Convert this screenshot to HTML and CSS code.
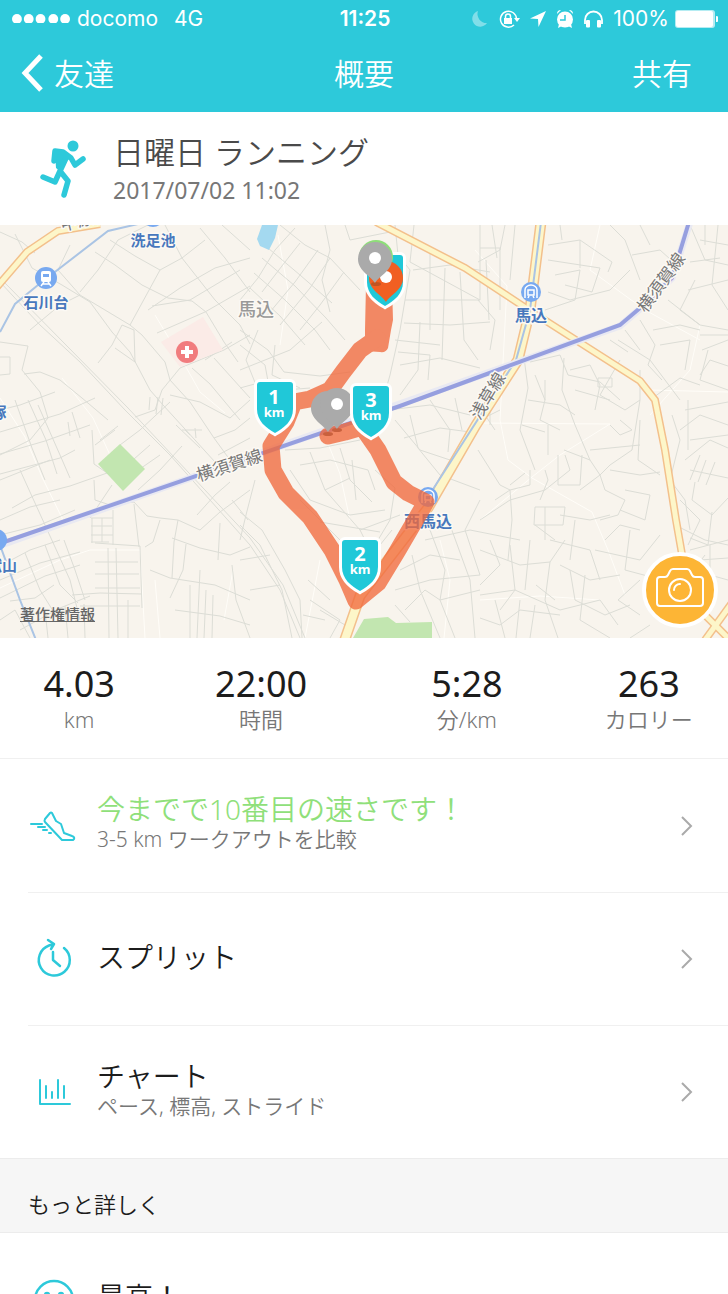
FILE: index.html
```html
<!DOCTYPE html>
<html lang="ja">
<head>
  <meta charset="UTF-8" />
  <meta name="viewport" content="width=device-width, initial-scale=1.0" />
  <title>概要</title>
  <link rel="stylesheet" href="styles.css">
</head>
<body>

  <header class="topbar">
    <div class="status">
      <div class="status-left">
        <svg class="signal" viewBox="0 0 60 10" aria-hidden="true">
          <circle cx="5" cy="5" r="5"/><circle cx="17" cy="5" r="5"/><circle cx="29" cy="5" r="5"/><circle cx="42" cy="5" r="5"/><circle cx="54" cy="5" r="5"/>
        </svg>
        <span>docomo</span>
        <span class="network">4G</span>
      </div>
      <span class="clock">11:25</span>
      <div class="status-right">
        <svg class="status-icons" viewBox="0 0 136 22" aria-hidden="true">
          <path opacity=".4" d="M7 3a8 8 0 1 0 9 12A9 9 0 0 1 7 3z"/>
          <g fill="none" stroke="#fff" stroke-width="1.5">
            <path d="M43 17a8 8 0 1 1 2.500-6"/>
            <path d="M34.500 11V8.500a2.500 2.500 0 0 1 5 0V11"/>
          </g>
          <path d="M33 10h8v6h-8zM43 10h6l-3 4z"/>
          <path d="M75 3 59 10.500l8 .5.500 8z"/>
          <circle cx="94" cy="11.500" r="8"/>
          <path d="M86 6a4 4 0 0 1 4-4zM102 6a4 4 0 0 0-4-4zM88 16l-1 4 4-2zM100 16l1 4-4-2z"/>
          <path d="M94 7v5h-5" fill="none" stroke="#2dc9da" stroke-width="1.500"/>
          <path d="M114 16v-4a8.500 8.500 0 0 1 17 0v4" fill="none" stroke="#fff" stroke-width="1.800"/>
          <rect x="115" y="12" width="4" height="7.500" rx="1"/><rect x="126" y="12" width="4" height="7.500" rx="1"/>
        </svg>
        <span>100%</span>
        <svg class="battery" viewBox="0 0 43 18" aria-hidden="true">
          <rect width="40" height="18" rx="3" opacity=".65"/><rect x="1" y="1" width="37" height="16" rx="2"/><path d="M41 6a3 3 0 0 1 0 6z"/>
        </svg>
      </div>
    </div>
    <nav class="nav">
      <button type="button" class="nav-btn back">
        <svg viewBox="0 0 22 38" aria-hidden="true"><path d="M20 2 4 19l16 17" fill="none" stroke="#fff" stroke-width="5"/></svg>友達
      </button>
      <h1>概要</h1>
      <button type="button" class="nav-btn share">共有</button>
    </nav>
  </header>

  <main>
    <section class="workout">
      <svg class="runner" viewBox="0 0 46 58" aria-hidden="true">
        <circle cx="33" cy="6" r="5.500"/>
        <path d="M15 10 28 15 21 32 16 28z"/>
        <path d="M14 21 15 11 23 12 31 18 35 25 43 19M27 16 20 31 28 41 24 55M20 31 15 42 3 37" fill="none" stroke="#2dc9da" stroke-width="5.500" stroke-linecap="round" stroke-linejoin="round"/>
      </svg>
      <div>
        <h2>日曜日 ランニング</h2>
        <p class="date">2017/07/02 11:02</p>
      </div>
    </section>

    <section class="map">
      <svg class="map-art" viewBox="0 225 728 413" role="img" aria-label="ランニングコース">
        <defs>
          <path id="shield" d="M-15 0H15a3 3 0 0 1 3 3V27C18 39 9 46 0 51-9 46-18 39-18 27V3a3 3 0 0 1 3-3z"/>
          <path id="pin" d="M0 24C-4 17-17 12-17 0a17 17 0 0 1 34 0C17 12 4 17 0 24z"/>
          <g id="train">
            <circle r="11" fill="#78a9f0"/>
            <rect x="-5" y="-7" width="10" height="11" rx="2" fill="#fff"/>
            <path d="M-3-4h6v3h-6z" fill="#78a9f0"/>
            <path d="M-2 4-5 8M2 4 5 8M-4 6H4" stroke="#fff" stroke-width="1.500"/>
          </g>
          <g id="metro">
            <circle r="10" fill="#78a9f0"/>
            <path d="M-6 6V-2a6 5 0 0 1 12 0V6" fill="none" stroke="#fff" stroke-width="1.500"/>
            <path d="M-3 3v-5h6v5zM-3 6l1-2M3 6 2 4" fill="none" stroke="#fff" stroke-width="1.500"/>
          </g>
        </defs>
        <rect y="225" width="728" height="413" fill="#f8f4ed"/>

        <!-- streets -->
        <g class="street-light">
          <path d="M0 398 25 437 42 477 63 520M62 378 93 418 110 455M155 315 182 360 200 392 225 413M278 235 288 290 280 345M322 428 340 474 350 520M475 250 507 286 500 420 508 460 532 478M478 423 610 424 560 455 532 477 480 520M532 478 592 512 608 550 625 595M600 225 590 270 645 310 700 340M650 390 728 392M700 325 690 370 650 415M0 588 60 560 90 550 140 550 145 638M155 580 160 638M233 570 224 620M320 560 305 638M440 540 450 580 444 638M480 600 540 596 600 600"/>
        </g>
        <g class="street">
          <path d="M0 282 40 325 80 362 125 410 170 455 210 500 250 545 280 590 300 638M4 282 128 408 250 538 283 585 305 638"/>
          <path d="M15 234 32 268 62 285 90 302 112 332 130 352 150 390 163 405 195 440 215 462"/>
          <path d="M35 253 22 242 0 232M70 245 58 270 80 295 130 325 142 335 165 362 170 380 190 402 214 438 230 460"/>
          <path d="M80 292 98 270 118 240 148 225M80 295 60 305 30 330M130 325 160 270 182 258 205 240M148 310 180 288 215 268 250 258"/>
          <path d="M95 252 115 265 142 285 168 298 192 301 206 312 224 342 238 362M110 240 135 256 160 270M165 225 182 258 215 300 240 325 250 344"/>
          <path d="M200 228 225 258 250 292M222 225 250 250M152 306 190 300 240 270M157 333 205 312 250 286M180 368 224 350 250 335"/>
          <path d="M192 368 210 384 240 420M214 358 250 398M205 360 232 342M180 368 162 390 155 410 135 417M170 395 200 402 230 418 250 400"/>
          <path d="M150 397 149 410M158 397 156 414M163 398 161 415M115 348 135 362 134 330 122 325 112 345 98 363"/>
          <path d="M0 342 28 346 22 370 40 392 48 418 30 440 0 455M0 357 10 357 10 374 0 375M24 374 40 372 60 380 82 398 108 420"/>
          <path d="M0 410 20 405 55 392M0 432 60 414 95 398M0 454 45 441 90 425M0 474 60 458 75 450M15 400 32 448 45 480M28 400 46 440 57 474M38 405 60 455 70 478"/>
          <path d="M0 480 50 460M12 508 35 495 70 486 110 472M0 520 30 507 60 500M0 535 40 525 75 510M20 470 45 525 70 580 80 620"/>
          <path d="M68 422 70 436M72 412 80 438M92 430 94 464 110 475M95 445 115 430M100 440 118 426M120 445 140 430 170 402"/>
          <path d="M126 466 150 445M134 473 160 455M112 485 98 506 90 518M94 480 95 500 110 505 134 502 147 516 160 518 178 520 200 530"/>
          <path d="M91 518H113M91 526H112M91 535H113M91 542H109M92 518V543M102 518V542M113 510V545M134 504 139 547M95 543 140 546 142 608"/>
          <path d="M95 562H138M95 574H139M95 588H140M72 595 100 593 142 594M80 606H140M116 548 118 638M108 548 109 638M128 600V638"/>
          <path d="M0 566 30 550 60 540M0 580 40 563 80 552M0 598 45 576 80 565M25 553 40 590 55 614M45 545 60 585 78 603M64 540 75 570 85 600"/>
          <path d="M10 601 35 598 54 585M20 630 60 608 90 596M0 620 15 610 30 638M45 610 48 638M65 606 68 638M84 604 85 638"/>
          <path d="M178 520 174 542 172 578M160 520 153 542 145 547M172 538 200 548 230 555 250 547M186 544 183 570 170 598M220 523 218 560M232 500 248 520"/>
          <path d="M197 515 215 495 230 482M200 530 220 512 250 490M150 570 170 578 215 585 250 600M190 638V585M197 638 200 570M204 638 206 590M212 638 213 595M232 565 236 600 250 638M175 610 220 616 250 625"/>
          <path d="M185 430 190 435M195 428 196 438M182 430 202 430M214 438 235 430 250 418M218 455 250 438M176 425 200 448M138 490 160 470 182 446"/>
        </g>
        <g class="street">
          <path d="M280 225 305 245 330 258 360 290M295 228 275 250 258 278 240 300M300 243 285 262 262 292M318 250 295 282 265 318M330 258 310 288 280 325M344 272 320 305 300 330"/>
          <path d="M262 258 295 286 326 318 345 340M254 273 285 300 315 330 330 350M250 288 280 316 305 345M268 248 300 275 332 303"/>
          <path d="M240 330 268 350 284 372 320 376 350 372M240 345 265 365 270 392M240 370 260 362 290 350 322 322M258 330 246 360 258 390M275 345 272 375 300 388M240 388 262 382 285 390 310 388"/>
          <path d="M325 225 330 250 322 280 330 312M345 225 350 240 390 232 420 248M395 225 398 255 410 270 400 330 390 375 383 400M413 270 450 265 490 272M405 300H480M404 323 450 325 490 322M414 225 410 262 480 300"/>
          <path d="M430 250V330M445 268 442 360M420 322 418 370 400 395M460 272 464 340 478 360M400 365 440 358 480 368M395 340 440 345M398 352 430 355 428 380"/>
          <path d="M310 452 325 490 360 530 375 560M300 465 330 460 368 470 375 490M285 450 320 448 360 440M290 470 310 500 350 515 385 510M340 448 350 480 372 502"/>
          <path d="M325 490 350 478M352 460 356 500M360 530 400 515M320 522 380 532M345 538 380 545 392 530M300 500 345 545M375 470 395 488 390 520 378 540"/>
          <path d="M395 420 420 450 450 460M388 410 430 405 470 415M410 415 418 448 440 475M430 400 450 430 448 452M455 398 462 430M404 438 440 428 470 432M440 475 480 490"/>
          <path d="M240 512 262 530 285 570 300 600 302 638M240 525 260 545 282 590 292 638M255 480 246 515 240 540M240 560 270 555M250 590 280 585"/>
          <path d="M310 600 340 620 330 638M308 580 330 600M320 610 345 625M303 615 325 620M400 570 430 555 460 560M395 590 430 580 480 575M405 610 425 590 440 600 480 590"/>
          <path d="M412 555 420 590 440 638M430 530 445 570 440 600 455 638M450 525 470 580 475 638M425 540 470 530 520 540M480 500 465 530 480 575M395 605 410 622"/>
        </g>
        <g class="street">
          <path d="M480 225V300M492 225 497 258M505 225 500 250 478 262M515 225 510 280M480 248H500V310M478 300 495 320 490 350M486 260 489 320M548 245 580 240 612 262 608 272"/>
          <path d="M560 225 562 240M548 260 600 268 592 292 565 285M555 275 580 270 575 300 545 310M580 240V268M548 292 570 300 610 290 630 270"/>
          <path d="M610 225 625 240 640 280M632 255 660 250 680 268M640 225 650 245M668 300 700 325 728 330M695 280 680 310 700 325M688 290 728 280M690 225 705 260 728 265M700 240 728 245M705 225V245M718 225 712 285 728 310M690 262 720 258"/>
          <path d="M640 320 655 345 648 365 662 380M653 330 680 325 700 330M660 345 690 340 685 370M618 340 650 360 680 400M625 330 640 350M650 400 680 378 700 385M610 340 628 352"/>
          <path d="M700 335H728M702 350 728 340M708 350 700 380 728 390M700 375 710 360 728 366M685 410 728 402M680 430 700 415 728 425M690 440 728 435M688 400V450"/>
          <path d="M523 350 528 388 520 430 535 470M530 362 560 355 568 375 600 382 620 400M564 358 562 390 575 425 590 460 600 475M535 375 545 400 540 420 560 430M528 400 560 405 575 415"/>
          <path d="M570 370 590 365 600 385 595 410M598 378H612V387H598zM575 390 610 400M545 380V400M522 425 545 432M548 425V455"/>
          <path d="M620 360 600 395 625 410 640 400M620 420 632 430 620 435 610 425M640 370V400L632 450 610 465 600 475 580 490M590 450 640 445M564 450 590 460M558 455V485H580L582 455"/>
          <path d="M480 420 500 410M485 415 495 430M490 408V425M478 450 500 485 510 490 512 520 508 560M525 473 510 485M530 470V485L510 490 495 500M545 470 548 480 540 500"/>
          <path d="M480 520 510 500 545 490 570 470 565 455M535 507H565L563 525H534zM535 525 555 540M545 507V540M560 515 590 520 610 515M575 520 570 560M550 540 590 550 600 580"/>
          <path d="M600 475 605 490 625 500 618 515 600 520M625 490 650 495 645 520 620 510M610 470 640 475 660 472M640 420 638 460 660 475M605 540 620 525 640 530M595 550 640 560 660 535M630 530 625 570 655 578"/>
          <path d="M672 415 680 440 670 480 685 500 690 530M685 460 710 440 728 448M690 480 700 455M698 482 706 460M706 485 715 462M690 470 728 478M695 482 692 500 712 515 728 498M712 512 708 545 690 538"/>
          <path d="M680 500 700 520 688 545M675 525 705 540 728 545M690 550 728 540M710 545V575L728 580M700 560 728 558M680 550V590M705 555 690 575"/>
          <path d="M480 550 520 565 550 562 565 540M490 540 500 565 480 585M510 545 515 590 500 610M530 540 525 590M550 562 545 600 558 638M560 565 590 580 620 575M480 595 515 590 560 610 600 600"/>
          <path d="M520 600 516 638M536 585 555 600M570 570 575 600 605 615 630 605M585 575 580 620 610 638M600 600 618 625M480 618 500 625 520 610 560 615M640 580 618 600 640 615M630 638 650 625M495 600 505 638M535 605 530 638"/>
        </g>

        <!-- hospital, parks, pond -->
        <path d="M161 342 203 317 223 350 180 367z" fill="#fbebe7"/>
        <path d="M120 444 145 469 123 491 98 464z" fill="#c2e6b0"/>
        <path d="M262 225h16l-3 13-6 12-9-4-3-7z" fill="#a4d9f0"/>
        <path d="M353 638 364 619 388 617 396 623 432 622V638z" fill="#c2e6b0"/>

        <!-- main roads -->
        <g class="road-edge">
          <path d="M-4 288 27 252 58 231 100 224"/>
          <path d="M376 222 465 268 532 312 640 381 655 400 665 450 676 520 690 600 728 638"/>
          <path d="M541 222 530 310 518 360 476 425 428 508 360 596 343 645" stroke-width="11"/>
          <path d="M734 600 705 640"/>
        </g>
        <g class="road">
          <path d="M-4 288 27 252 58 231 100 224"/>
          <path d="M376 222 465 268 532 312 640 381 655 400 665 450 676 520 690 600 728 638"/>
          <path d="M541 222 530 310 518 360 476 425 428 508 360 596 343 645" stroke-width="8"/>
          <path d="M734 600 705 640"/>
        </g>

        <!-- railways -->
        <path class="rail-thin" d="M0 332 15 304 38 285 108 231 138 224M0 545 20 600 38 645M541 222 530 310 516 360 428 497"/>
        <path d="M4 544 620 326 640 309 672 278 690 222" fill="none" stroke="#e9e9f2" stroke-width="7"/>
        <path d="M4 542 400 406 620 325 640 308 672 278 689 222" fill="none" stroke="#969fdf" stroke-width="4"/>

        <!-- stations -->
        <use href="#train" x="46" y="278"/>
        <use href="#metro" x="531" y="292"/>
        <use href="#metro" x="428" y="497"/>
        <circle cx="-4" cy="540" r="11" fill="#78a9f0"/>
        <circle cx="153" cy="216" r="11" fill="#78a9f0"/>
        <circle cx="187" cy="352" r="11" fill="#f17c7e"/>
        <path d="M181 352h12M187 346v12" stroke="#fff" stroke-width="4"/>

        <g class="station">
          <text x="153" y="246">洗足池</text>
          <text x="46" y="308">石川台</text>
          <text x="531" y="321" class="big">馬込</text>
          <text x="428" y="527" class="big">西馬込</text>
          <text x="-1" y="418">塚</text>
          <text x="2" y="571">獄山</text>
        </g>
        <text class="area" x="256" y="316">馬込</text>
        <g class="line-name">
          <text x="95" y="223" transform="rotate(-14 95 223)">中原街道</text>
          <text x="231" y="471" transform="rotate(-18 231 471)">横須賀線</text>
          <text x="666" y="286" transform="rotate(-54 666 286)">横須賀線</text>
          <text x="493" y="399" transform="rotate(-59 493 399)">浅草線</text>
        </g>

        <!-- route -->
        <g class="route">
          <path d="M366 285H392L393 320 391 330 388 348Q386 353 380 352L365 351V330Z"/>
          <path d="M377 338 360 350 343 372 330 390 310 399 294 402 286 422 271 446 273 470 286 493 310 517 332 550 347 580 356 601 378 583 398 550 426 502 408 493 394 482 378 450 362 427 345 432 328 436"/>
        </g>

        <!-- kilometre marks and pins -->
        <g class="mark">
          <use href="#shield" x="385" y="255"/>
          <use href="#shield" x="275" y="382"/>
        </g>
        <use href="#pin" x="376" y="257" fill="#8ede79"/>
        <use href="#pin" x="386" y="278" fill="#f15f22"/>
        <circle cx="386" cy="277" r="6" fill="#fff"/>
        <ellipse cx="376" cy="284" rx="5" ry="2" fill="#a14d25" opacity=".6"/>
        <use href="#pin" x="375" y="259" fill="#aaa"/>
        <circle cx="375" cy="258" r="6" fill="#fff"/>
        <ellipse cx="328" cy="434" rx="5" ry="2" fill="#c9603d"/>
        <ellipse cx="337" cy="430" rx="5" ry="2" fill="#c9603d"/>
        <use href="#pin" x="328" y="408" fill="#aaa"/>
        <use href="#pin" x="337" y="405" fill="#aaa"/>
        <circle cx="337" cy="404" r="6" fill="#fff"/>
        <g class="mark">
          <use href="#shield" x="371" y="386"/>
          <use href="#shield" x="360" y="540"/>
        </g>
        <g class="km">
          <text x="274" y="404">1<tspan x="274" dy="13">km</tspan></text>
          <text x="371" y="407">3<tspan x="371" dy="13">km</tspan></text>
          <text x="360" y="561">2<tspan x="360" dy="13">km</tspan></text>
        </g>
      </svg>
      <a class="copyright" href="#">著作権情報</a>
      <button type="button" class="camera" aria-label="写真を追加">
        <svg viewBox="0 0 48 40" aria-hidden="true">
          <path d="M4 9H9Q11 9 12 7L14 3Q15 1 17 1H31Q33 1 34 3L36 7Q37 9 39 9H44Q47 9 47 12V35Q47 38 44 38H4Q1 38 1 35V12Q1 9 4 9z"/>
          <circle cx="24" cy="22" r="11"/><path d="M18 22a6 6 0 0 1 6-6"/>
        </svg>
      </button>
    </section>

    <dl class="stats">
      <div><dd>4.03</dd><dt>km</dt></div>
      <div><dd>22:00</dd><dt>時間</dt></div>
      <div><dd>5:28</dd><dt>分/km</dt></div>
      <div><dd>263</dd><dt>カロリー</dt></div>
    </dl>

    <div class="list">
      <a class="row" href="#">
        <svg class="icon" viewBox="0 0 50 50" aria-hidden="true">
          <path d="M17 18 22 12Q23 11 24 12L28 20 33 23 36 32 44 35Q47 36 46 38L45 39H34L17 21Q16 20 17 18zM3 23H14M10 26H17M15 29H19M21 32H23"/>
        </svg>
        <span class="row-text">
          <span class="row-title best">今までで10番目の速さです！</span>
          <span class="row-sub">3-5 km ワークアウトを比較</span>
        </span>
        <svg class="chevron" viewBox="0 0 12 20" aria-hidden="true"><path d="M1 1l9 9-9 9"/></svg>
      </a>
      <a class="row" href="#">
        <svg class="icon" viewBox="0 0 50 50" aria-hidden="true">
          <path d="M36 14A15.500 15.500 0 1 1 21 11.500L26 10M20 6 26 10 23 15M25 18V26L32 32" stroke-width="2.500"/>
        </svg>
        <span class="row-text">
          <span class="row-title">スプリット</span>
        </span>
        <svg class="chevron" viewBox="0 0 12 20" aria-hidden="true"><path d="M1 1l9 9-9 9"/></svg>
      </a>
      <a class="row" href="#">
        <svg class="icon" viewBox="0 0 50 50" aria-hidden="true">
          <path d="M12 13V37H42M18 19V31M24 25V31M30 13V31M36 19V31"/>
        </svg>
        <span class="row-text">
          <span class="row-title">チャート</span>
          <span class="row-sub">ペース, 標高, ストライド</span>
        </span>
        <svg class="chevron" viewBox="0 0 12 20" aria-hidden="true"><path d="M1 1l9 9-9 9"/></svg>
      </a>
    </div>

    <h3 class="section-title">もっと詳しく</h3>

    <div class="list">
      <a class="row" href="#">
        <svg class="icon" viewBox="0 0 50 50" aria-hidden="true">
          <g stroke-width="2.500"><circle cx="26" cy="25" r="19"/><path d="M17 20a2 2 0 0 1 4 0M31 20a2 2 0 0 1 4 0M16 30q10 10 20 0"/></g>
        </svg>
        <span class="row-text">
          <span class="row-title">最高！</span>
        </span>
      </a>
    </div>
  </main>

</body>
</html>
```
FILE: styles.css
```css
* {
  box-sizing: border-box;
}
body {
  display: flex;
  flex-direction: column;
  height: 100vh;
  margin: 0;
  overflow: hidden;
  background: #fff;
  color: #1c1c1c;
  font-family: "Noto Sans", "Noto Sans CJK JP", sans-serif;
  font-weight: 350;
}
h1, h2, h3, p, dl, dd {
  margin: 0;
  font-weight: 350;
}
button {
  padding: 0;
  border: 0;
  font: inherit;
  color: inherit;
  cursor: pointer;
}
a {
  color: inherit;
  text-decoration: none;
}
svg {
  flex: none;
}

/* top bar */
.topbar {
  flex: none;
  background: #2dc9da;
  color: #fff;
}
.status, .nav {
  display: grid;
  grid-template-columns: 1fr auto 1fr;
  align-items: center;
}
.status {
  height: 37px;
  padding: 0 10px 0 12px;
  font-family: Inter, sans-serif;
  font-size: 21px;
  font-weight: 400;
}
.status svg {
  fill: #fff;
}
.status-left, .status-right {
  display: flex;
  align-items: center;
  gap: 6px;
}
.status-right {
  justify-content: flex-end;
}
.signal {
  width: 59px;
}
.network {
  margin-left: 10px;
}
.clock {
  font-weight: 600;
}
.status-icons {
  width: 136px;
}
.battery {
  width: 43px;
}
.nav {
  height: 75px;
  padding: 0 21px 6px;
  font-family: "Noto Sans CJK JP", sans-serif;
  font-size: 30px;
}
.nav h1 {
  font-size: 30px;
}
.nav-btn {
  display: flex;
  align-items: center;
  gap: 11px;
  background: none;
}
.back svg {
  width: 22px;
  margin-top: 3px;
}
.share {
  justify-self: end;
  padding-right: 15px;
}

/* workout */
main {
  flex: 1;
  min-height: 0;
  overflow-y: auto;
  scrollbar-width: none;
}
.workout {
  display: flex;
  align-items: center;
  gap: 27px;
  height: 113px;
  padding: 0 40px;
}
.runner {
  width: 46px;
  fill: #2dc9da;
}
.workout h2 {
  font-size: 31px;
  line-height: 42px;
  color: #4a4a4a;
}
.date {
  font-size: 23px;
  font-weight: 400;
  line-height: 34px;
  color: #777;
}

/* map */
.map {
  position: relative;
}
.map-art {
  display: block;
  width: 100%;
  font-family: "Noto Sans CJK JP", sans-serif;
  text-anchor: middle;
}
.street, .street-light {
  fill: none;
  stroke: #dcddd6;
  stroke-width: 1;
}
.street-light {
  stroke: #fffdf8;
}
.road-edge {
  fill: none;
  stroke: #f3c08c;
  stroke-width: 8;
}
.road {
  fill: none;
  stroke: #fdf6c9;
  stroke-width: 5;
}
.rail-thin {
  fill: none;
  stroke: #aac4e4;
  stroke-width: 2;
}
.station, .area, .line-name {
  stroke: #fcf9f4;
  stroke-width: 3;
  stroke-linejoin: round;
  paint-order: stroke;
}
.station {
  fill: #4878bd;
  font-size: 15px;
  font-weight: 700;
}
.station .big {
  font-size: 16px;
}
.area {
  fill: #999;
  font-size: 18px;
  font-weight: 500;
}
.line-name {
  fill: #777;
  font-size: 17px;
  font-weight: 400;
}
.route {
  opacity: .77;
  fill: #f1683b;
}
.route path + path {
  fill: none;
  stroke: #f1683b;
  stroke-width: 17;
  stroke-linecap: round;
  stroke-linejoin: round;
}
.mark {
  fill: #20c8d8;
  stroke: #fff;
  stroke-width: 6;
  paint-order: stroke;
}
.km {
  fill: #fff;
  font-family: "Noto Sans", sans-serif;
  font-size: 20px;
  font-weight: 700;
}
.km tspan {
  font-size: 13px;
}
.copyright {
  position: absolute;
  left: 20px;
  bottom: 14px;
  font-family: "Noto Sans CJK JP", sans-serif;
  font-size: 15px;
  font-weight: 500;
  color: #666;
  text-decoration: underline;
}
.camera {
  position: absolute;
  right: 10px;
  bottom: 10px;
  display: grid;
  place-items: center;
  width: 76px;
  height: 76px;
  border: 4px solid #fff;
  border-radius: 50%;
  background: #fdb535;
}
.camera svg {
  width: 48px;
  margin-bottom: 4px;
  fill: none;
  stroke: #fff;
  stroke-width: 2;
  stroke-linecap: round;
}

/* stats */
.stats {
  display: grid;
  grid-template-columns: 10fr 13fr 13fr 10fr;
  height: 121px;
  padding-top: 24px;
  border-bottom: 1px solid #f0f0f0;
  text-align: center;
}
.stats div {
  display: flex;
  flex-direction: column;
}
.stats dd {
  font-size: 36px;
  font-weight: 400;
  line-height: 44px;
}
.stats dt {
  font-size: 22px;
  line-height: 26px;
  color: #777;
}

/* rows */
.list {
  padding-left: 28px;
}
.row {
  display: flex;
  align-items: center;
  gap: 19px;
  min-height: 133px;
  padding-right: 35px;
}
.row + .row {
  border-top: 1px solid #f0f0f0;
}
.icon {
  width: 50px;
  fill: none;
  stroke: #2dc9da;
  stroke-width: 2;
  stroke-linecap: round;
  stroke-linejoin: round;
}
.row-text {
  display: flex;
  flex: 1;
  flex-direction: column;
  padding-bottom: 5px;
}
.row-title {
  font-size: 28px;
  line-height: 32px;
}
.best {
  color: #8fe07a;
}
.row-sub {
  font-size: 21px;
  line-height: 28px;
  color: #777;
}
.chevron {
  width: 12px;
  fill: none;
  stroke: #aaa;
  stroke-width: 2;
}
.section-title {
  height: 75px;
  padding: 16px 28px 0;
  border: solid #ececec;
  border-width: 1px 0;
  background: #f6f6f6;
  font-size: 22px;
  line-height: 58px;
}
```
